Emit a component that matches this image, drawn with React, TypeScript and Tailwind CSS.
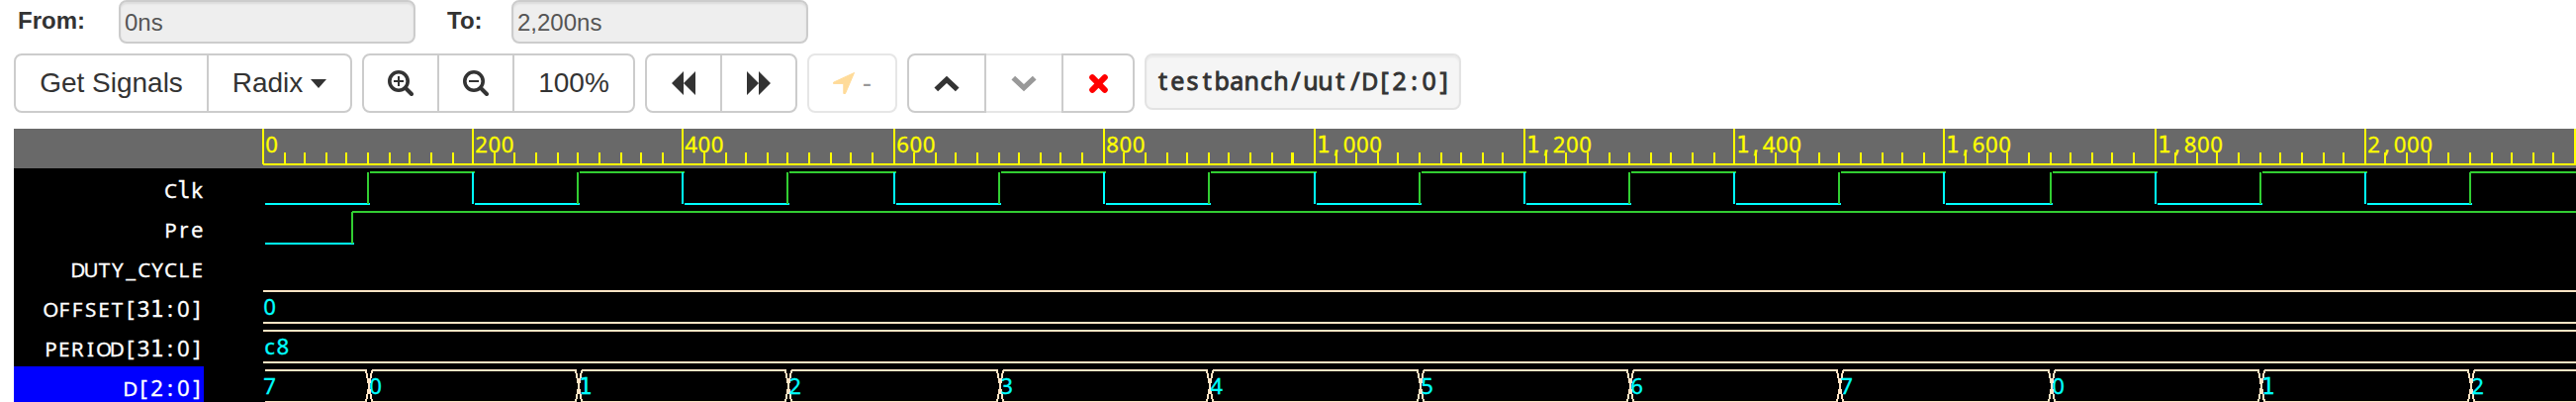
import React from 'react';

const UNIT = 10.618;
const STEP = 10;

const tickX = (k: number) => (k < 50 ? 265 : 266) + 2 * Math.round(UNIT * k);

/* Fixed-pitch text: every character is centred in a cell of equal width. */
function Mono({ text, x, y, fill, size = 22.2, pitch = 13.25, bold = 0.3 }: {
  text: string; x: number; y: number; fill: string; size?: number; pitch?: number; bold?: number;
}) {
  const chars = text.split('');
  return (
    <text y={y} fill={fill} stroke={fill} strokeWidth={bold} textAnchor="middle" fontFamily='"Noto Sans", sans-serif'>
      {chars.map((c, i) => {
        const mono = c === '1' || c === 'l';
        const upper = c >= 'A' && c <= 'Z';
        return (
          <tspan
            key={i}
            x={x + pitch * (i + 0.5)}
            fontSize={upper ? size * 0.93 : size}
            fontFamily={mono ? '"DejaVu Sans Mono", monospace' : undefined}
          >
            {c}
          </tspan>
        );
      })}
    </text>
  );
}

const signals = ['Clk', 'Pre', 'DUTY_CYCLE', 'OFFSET[31:0]', 'PERIOD[31:0]', 'D[2:0]'];

function Names() {
  return (
    <div className="flex w-[192px] shrink-0 flex-col">
      {signals.map((s, i) => {
        const bracket = s.endsWith(']');
        const w = s.length * 13.4;
        return (
          <div key={s} className={i === 5 ? 'h-10 bg-[#0000ff]' : 'h-10'}>
            <svg width="192" height="40" className="block">
              <Mono text={s} x={(bracket ? 191.5 : 192) - w} y={30} fill="#fff" pitch={13.4} />
            </svg>
          </div>
        );
      })}
    </div>
  );
}

function Ruler() {
  const ticks = Array.from({ length: 111 }, (_, k) => k);
  return (
    <svg width="2590" height="40" viewBox="14 130 2590 40" className="block bg-[#696969]" shapeRendering="crispEdges">
      <rect x="266" y="165" width="2338" height="2" fill="#ff0" />
      {ticks.map((k) => {
        const major = k % STEP === 0;
        return <rect key={k} x={tickX(k)} y={major ? 130 : 154} width={k === 49 ? 3 : 2} height={major ? 36 : 12} fill="#ff0" />;
      })}
      {ticks.filter((k) => k % STEP === 0 && k < 110).map((k) => (
        <Mono key={k} text={(k * 20).toLocaleString('en-US')} x={tickX(k) + 3} y={153.5} fill="#ff0" />
      ))}
    </svg>
  );
}

function Waves() {
  const edges = Array.from({ length: 22 }, (_, i) => i);
  const values = ['0', '1', '2', '3', '4', '5', '6', '7', '0', '1', '2'];
  const cross = values.map((v, i) => ({ v, x: tickX(5 + i * 10) + 1 }));
  const green = '#32cd32';
  const cyan = '#0ff';
  const bus = '#ffe4c4';
  return (
    <svg width="2398" height="236" viewBox="206 170 2398 236" className="block" shapeRendering="crispEdges">
      {edges.map((i) => {
        const a = tickX(i * 5);
        const b = i === 21 ? 2604 : tickX((i + 1) * 5);
        const high = i % 2 === 1;
        const s = i === 21 ? a + 1 : a + 3;
        return (
          <g key={i}>
            <rect x={s} y={high ? 173 : 205} width={b + 3 - s} height="2" fill={high ? green : cyan} />
            {i > 0 && <rect x={a} y="174" width="2" height="32" fill={high ? green : cyan} />}
          </g>
        );
      })}
      <rect x="268" y="245" width="90" height="2" fill={cyan} />
      <rect x="355" y="214" width="2" height="32" fill={green} />
      <rect x="356" y="213" width="2248" height="2" fill={green} />
      {[293, 325, 333, 365].map((y) => (
        <rect key={y} x="266" y={y} width="2338" height="2" fill={bus} />
      ))}
      {[268, ...cross.map((c) => c.x + 4)].map((x, i) => {
        const end = i < cross.length ? cross[i].x - 1 : 2604;
        return (
          <g key={x}>
            <rect x={x} y="373" width={end - x} height="2" fill={bus} />
            <rect x={x} y="405" width={end - x} height="2" fill={bus} />
          </g>
        );
      })}
      {cross.map(({ x }) => (
        <path key={x} d={`M${x - 2} 374L${x + 4} 406M${x + 4} 374L${x - 2} 406`} stroke={bus} strokeWidth="2" fill="none" />
      ))}
      <Mono text="0" x={266} y={318} fill={cyan} />
      <Mono text="c8" x={266} y={358} fill={cyan} />
      <Mono text="7" x={266} y={398} fill={cyan} />
      {cross.map(({ v, x }) => <Mono key={x} text={v} x={x + 1} y={398} fill={cyan} />)}
    </svg>
  );
}

const btn = 'flex h-[60px] items-center justify-center border-2 border-[#ccc] bg-white text-[28px] text-[#333]';

function Zoom({ plus = false }: { plus?: boolean }) {
  return (
    <svg width="26" height="26" viewBox="0 0 26 26" fill="none" stroke="#333">
      <circle cx="11" cy="11" r="9.2" strokeWidth="3.6" />
      <path d="M18 18L24 24" strokeWidth="4" strokeLinecap="round" />
      <path d={plus ? 'M6 11H16M11 6V16' : 'M6 11H16'} strokeWidth="2" />
    </svg>
  );
}

export default function App() {
  return (
    <div className="h-[406px] w-[2604px] overflow-hidden bg-white font-['Liberation_Sans',Arial,sans-serif] text-[#333]">
      <div className="flex h-[44px] items-start text-[24px] leading-[42px]">
        <div className="w-[120px] pl-[18px] text-[24px] font-bold">From:</div>
        <div className="h-[44px] w-[300px] rounded-[8px] border-2 border-[#ccc] bg-[#eee] pl-1 leading-[41px] text-[#555] shadow-[inset_0_2px_2px_rgba(0,0,0,0.075)]">0ns</div>
        <div className="w-[97px] pl-8 text-[24px] font-bold">To:</div>
        <div className="h-[44px] w-[300px] rounded-[8px] border-2 border-[#ccc] bg-[#eee] pl-1 leading-[41px] text-[#555] shadow-[inset_0_2px_2px_rgba(0,0,0,0.075)]">2,200ns</div>
      </div>
      <div className="mt-[10px] flex h-[60px] gap-[10px] pl-[14px]">
        <div className="flex">
          <div className={`${btn} w-[197px] rounded-l-[8px]`}>Get Signals</div>
          <div className={`${btn} -ml-[2px] w-[147px] gap-2 rounded-r-[8px]`}>
            Radix
            <svg width="16" height="9" viewBox="0 0 16 9"><path d="M0 0H16L8 9Z" fill="#333" /></svg>
          </div>
        </div>
        <div className="flex">
          <div className={`${btn} w-[78px] rounded-l-[8px]`}><Zoom plus /></div>
          <div className={`${btn} -ml-[2px] w-[78px]`}><Zoom /></div>
          <div className={`${btn} -ml-[2px] w-[124px] rounded-r-[8px]`}>100%</div>
        </div>
        <div className="flex">
          <div className={`${btn} w-[78px] rounded-l-[8px]`}>
            <svg width="24" height="24" viewBox="0 0 24 24" fill="#333"><path d="M0 12L12 0V24ZM12 12L24 0V24Z" /></svg>
          </div>
          <div className={`${btn} -ml-[2px] w-[78px] rounded-r-[8px]`}>
            <svg width="24" height="24" viewBox="0 0 24 24" fill="#333"><path d="M24 12L12 0V24ZM12 12L0 0V24Z" /></svg>
          </div>
        </div>
        <div className={`${btn} w-[91px] gap-2 rounded-[8px] border-[#e6e6e6] text-[#999]`}>
          <svg width="22" height="22" viewBox="0 0 22 22" fill="#ffdb99" stroke="#ffdb99" strokeWidth="1" strokeLinejoin="round"><path d="M21.5 0.5L12.5 21.5H10.8V11.4H0.5V10.2Z" /></svg>
          <span>-</span>
        </div>
        <div className="flex">
          <div className={`${btn} relative z-10 w-[80px] rounded-l-[8px]`}>
            <svg width="26" height="17" viewBox="0 0 26 17" fill="none" stroke="#333" strokeWidth="5.4"><path d="M2.3 14.4L13 4.4L23.7 14.4" /></svg>
          </div>
          <div className={`${btn} -ml-[2px] w-[80px] border-[#e6e6e6]`}>
            <svg width="26" height="17" viewBox="0 0 26 17" fill="none" stroke="#999" strokeWidth="5.4"><path d="M2.3 2.6L13 12.6L23.7 2.6" /></svg>
          </div>
          <div className={`${btn} relative z-10 -ml-[2px] w-[74px] rounded-r-[8px]`}>
            <svg width="19" height="19" viewBox="0 0 19 19" fill="none" stroke="#f00" strokeWidth="6" strokeLinecap="round"><path d="M3.2 3.2L15.8 15.8M15.8 3.2L3.2 15.8" /></svg>
          </div>
        </div>
        <div className="h-[57px] w-[320px] rounded-[8px] border-2 border-[#e3e3e3] bg-[#f5f5f5] shadow-[inset_0_2px_2px_rgba(0,0,0,0.05)]">
          <svg width="316" height="53" viewBox="1159 56 316 53">
            <Mono text="testbanch/uut/D[2:0]" x={1168} y={91} fill="#333" size={25} pitch={14.95} bold={0.9} />
          </svg>
        </div>
      </div>
      <div className="ml-[14px] mt-4 w-[2590px] bg-black">
        <Ruler />
        <div className="flex h-[236px] overflow-hidden">
          <Names />
          <Waves />
        </div>
      </div>
    </div>
  );
}
